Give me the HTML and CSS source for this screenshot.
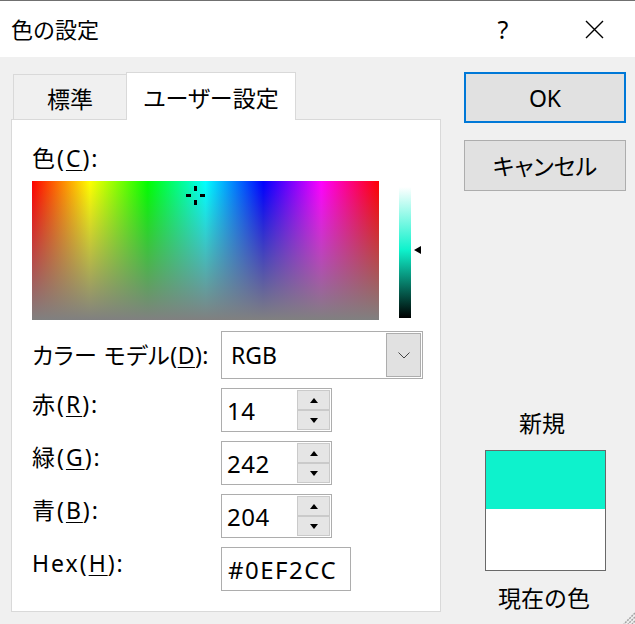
FILE: index.html
```html
<!DOCTYPE html>
<html lang="ja">
<head>
<meta charset="utf-8">
<title>色の設定</title>
<link rel="stylesheet" href="styles.css">
</head>
<body>
<div class="window">
  <header class="titlebar">
    <span class="title">色の設定</span>
    <span class="help">?</span>
    <span class="close">
      <svg width="19" height="19" viewBox="0 0 19 19"><path d="M1 1L18 18M18 1L1 18" stroke="#000" stroke-width="1.4" fill="none"/></svg>
    </span>
  </header>
  <div class="main">
    <div class="left">
      <div class="tabs">
        <div class="tab">標準</div>
        <div class="tab active">ユーザー設定</div>
      </div>
      <div class="panel">
        <div class="clabel">色(<u>C</u>):</div>
        <div class="picker">
          <div class="spectrum">
            <span class="ch ch-t"></span><span class="ch ch-b"></span><span class="ch ch-l"></span><span class="ch ch-r"></span>
          </div>
          <div class="lum"></div>
          <div class="lum-arrow"></div>
        </div>
        <div class="form">
          <div class="lbl mid">カラー モデル(<u>D</u>):</div>
          <div class="select">
            <span class="sel-val">RGB</span>
            <span class="sel-btn"><svg width="12" height="7" viewBox="0 0 12 7"><path d="M0.5 0.5L6 6L11.5 0.5" stroke="#444" stroke-width="1" fill="none"/></svg></span>
          </div>

          <div class="lbl">赤(<u>R</u>):</div>
          <div class="spinbox"><span class="val">14</span><span class="spin"><span class="sb"><i class="up"></i></span><span class="sb"><i class="down"></i></span></span></div>

          <div class="lbl">緑(<u>G</u>):</div>
          <div class="spinbox"><span class="val">242</span><span class="spin"><span class="sb"><i class="up"></i></span><span class="sb"><i class="down"></i></span></span></div>

          <div class="lbl">青(<u>B</u>):</div>
          <div class="spinbox"><span class="val">204</span><span class="spin"><span class="sb"><i class="up"></i></span><span class="sb"><i class="down"></i></span></span></div>

          <div class="lbl">Hex(<u>H</u>):</div>
          <div class="hexbox">#0EF2CC</div>
        </div>
      </div>
    </div>
    <div class="right">
      <div class="btn ok">OK</div>
      <div class="btn cancel">キャンセル</div>
      <div class="plabel new">新規</div>
      <div class="swatch"><div class="sw-new"></div><div class="sw-cur"></div></div>
      <div class="plabel cur">現在の色</div>
    </div>
  </div>
  <svg class="grip" width="12" height="12" viewBox="0 0 12 12">
    <path d="M12 1L1 12M12 5L5 12M12 9L9 12" stroke="#a3a3a3" stroke-width="1.5" stroke-dasharray="2 1" fill="none"/>
  </svg>
</div>
</body>
</html>
```
FILE: styles.css
```css
* { box-sizing: border-box; }
html, body { margin: 0; padding: 0; }
body {
  width: 635px;
  height: 624px;
  overflow: hidden;
  background: #f0f0f0;
  font-family: "Noto Sans", "Noto Sans CJK JP", sans-serif;
  font-size: 23px;
  color: #000;
}
.window { position: relative; width: 635px; height: 624px; }

.titlebar {
  height: 57px;
  border-top: 1px solid #707070;
  background: #fff;
  display: flex;
  align-items: center;
  padding-left: 11px;
}
.title { flex: 1; font-size: 22px; line-height: 30px; }
.help { width: 80px; text-align: center; font-size: 25px; line-height: 30px; }
.close { width: 80px; margin-left: 11px; margin-right: 1px; display: flex; justify-content: center; align-items: center; }

.main {
  display: flex;
  gap: 23px;
  padding: 15px 0 0 11px;
}
.left { width: 430px; display: flex; flex-direction: column; }

.tabs {
  display: flex;
  align-items: flex-end;
  height: 48px;
  padding-left: 2px;
  position: relative;
  z-index: 1;
}
.tab {
  width: 113px;
  height: 45px;
  margin-bottom: 1px;
  border-top: 1px solid #d9d9d9;
  border-left: 1px solid #d9d9d9;
  background: #f0f0f0;
  display: flex;
  align-items: center;
  justify-content: center;
  padding-top: 3px;
  line-height: 30px;
  font-feature-settings: "palt";
}
.tab.active {
  width: 170px;
  height: 48px;
  margin-bottom: 0;
  background: #fff;
  border-right: 1px solid #d9d9d9;
  padding-top: 2px;
}
.panel {
  margin-top: -1px;
  height: 493px;
  background: #fff;
  border: 1px solid #d9d9d9;
  padding: 23px 0 0 20px;
}
u { text-decoration-thickness: 1px; text-underline-offset: 3px; }
.clabel { line-height: 30px; letter-spacing: 2px; }

.picker { display: flex; margin-top: 8px; }
.spectrum {
  position: relative;
  width: 347px;
  height: 139px;
  background:
    linear-gradient(to bottom, rgba(128,128,128,0), #808080),
    linear-gradient(to right, #f00, #ff0 16.67%, #0f0 33.33%, #0ff 50%, #00f 66.67%, #f0f 83.33%, #f00);
}
.ch { position: absolute; background: #000; }
.ch-t { left: 162px; top: 5px; width: 3px; height: 5px; }
.ch-b { left: 162px; top: 19px; width: 3px; height: 5px; }
.ch-l { left: 154px; top: 13px; width: 5px; height: 3px; }
.ch-r { left: 168px; top: 13px; width: 5px; height: 3px; }
.lum {
  margin: 6px 0 0 20px;
  width: 12px;
  height: 131px;
  background: linear-gradient(to bottom, #fff, #0ef2cc 48%, #000);
}
.lum-arrow {
  margin: 65px 0 0 3px;
  width: 0;
  height: 0;
  border-top: 4.5px solid transparent;
  border-bottom: 4.5px solid transparent;
  border-right: 7px solid #000;
}

.form {
  display: grid;
  grid-template-columns: 189px auto;
  row-gap: 9px;
  margin-top: 11px;
  justify-items: start;
}
.lbl { line-height: 30px; padding-top: 1px; letter-spacing: 2px; }
.lbl.mid { align-self: center; padding-top: 0; letter-spacing: 0.5px; font-feature-settings: "palt"; }

.select {
  width: 202px;
  height: 48px;
  border: 1px solid #adadad;
  background: #fff;
  display: flex;
}
.sel-val { flex: 1; display: flex; align-items: center; padding-left: 9px; }
.sel-btn {
  width: 35px;
  margin: 1px;
  background: #e1e1e1;
  border: 1px solid #adadad;
  display: flex;
  align-items: center;
  justify-content: center;
}

.spinbox {
  width: 111px;
  height: 44px;
  border: 1px solid #adadad;
  background: #fff;
  display: flex;
}
.val { flex: 1; display: flex; align-items: center; padding-left: 5px; font-size: 24px; letter-spacing: 0.5px; }
.spin {
  width: 33px;
  margin: 1px 1px 1px 0;
  display: flex;
  flex-direction: column;
}
.sb {
  flex: 1;
  background: #e5e5e5;
  border: 1px solid #cacaca;
  display: flex;
  align-items: center;
  justify-content: center;
}
.sb i { display: block; width: 0; height: 0; border-left: 4.5px solid transparent; border-right: 4.5px solid transparent; }
.sb i.up { border-bottom: 5px solid #000; }
.sb i.down { border-top: 5px solid #000; }

.hexbox {
  width: 130px;
  height: 44px;
  border: 1px solid #adadad;
  background: #fff;
  display: flex;
  align-items: center;
  padding-left: 6px;
  font-size: 24px;
  letter-spacing: 1.5px;
}

.right { width: 162px; display: flex; flex-direction: column; }
.btn {
  height: 51px;
  background: #e1e1e1;
  border: 1px solid #adadad;
  display: flex;
  align-items: center;
  justify-content: center;
  line-height: 30px;
}
.btn.ok { border: 2px solid #0078d7; }
.btn.cancel { margin-top: 17px; font-feature-settings: "palt"; }
.plabel { text-align: center; line-height: 30px; }
.plabel.new { margin-top: 217px; padding-right: 6px; }
.swatch {
  width: 121px;
  height: 121px;
  margin: 12px 0 0 21px;
  border: 1px solid #696969;
  display: flex;
  flex-direction: column;
}
.sw-new { height: 58px; background: #0ef2cc; }
.sw-cur { flex: 1; background: #fff; }
.plabel.cur { margin-top: 12px; padding-right: 2px; }

.grip { position: absolute; right: 0; bottom: 0; }
```
